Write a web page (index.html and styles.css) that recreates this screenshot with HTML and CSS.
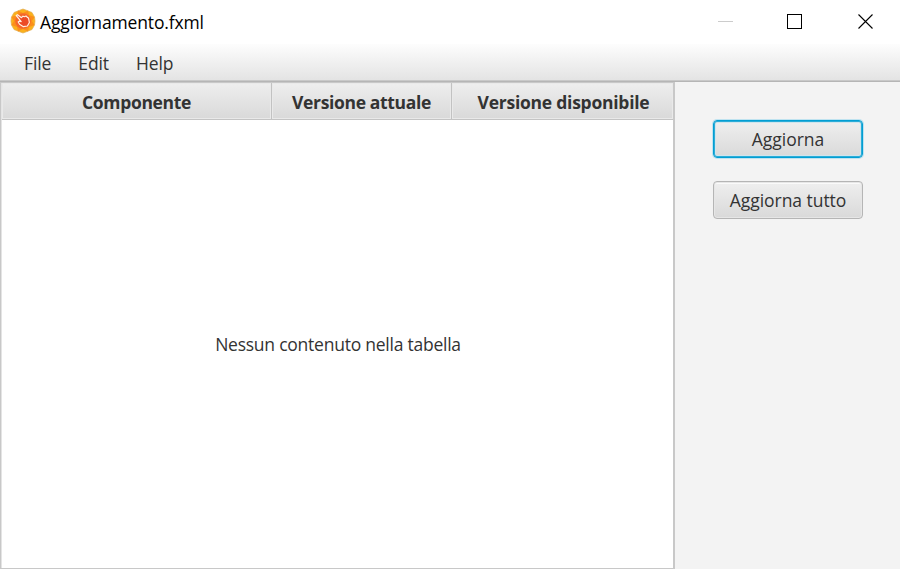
FILE: index.html
```html
<!DOCTYPE html>
<html lang="it">
<head>
<meta charset="utf-8">
<title>Aggiornamento.fxml</title>
<link rel="stylesheet" href="styles.css">
</head>
<body>
<div class="window">
  <header class="titlebar">
    <svg class="logo" width="26" height="26" viewBox="0 0 26 26">
      <path d="M13 1 L17 2.500 L22 4.500 L24.500 9 L25 13 L24.500 17 L22 21.500 L17 23.500 L13 25 L9 23.500 L4 21.500 L1.500 17 L1 13 L1.500 9 L4 4.500 L9 2.500Z" fill="#fbb11c" stroke="#dfae55" stroke-width=".7" stroke-linejoin="round"/>
      <path d="M8 2.500 L13 5 L18 2.500 L19 7 L24.500 9 L22 13 L24.500 17 L19 19 L18 23.500 L13 21 L8 23.500 L7 19 L1.500 17 L4 13 L1.500 9 L7 7Z" fill="#fb8f1c"/>
      <circle cx="13" cy="13" r="7.800" fill="#f5672a"/>
      <path d="M6.200 7.500 L7.500 6.700 L11.500 9.700 L13 8.200 L14.500 8.700 L16 8 L17.400 9.400 L18.500 10 L19.400 14.500 L17.400 18 L13.400 18.700 L9.600 16.300 L8.200 14 L9.200 13.100 L11.200 13.600Z" fill="#ec4a25" stroke="#fff1e2" stroke-width="1.200" stroke-linejoin="round"/>
    </svg>
    <span class="title">Aggiornamento.fxml</span>
    <svg class="controls" width="156" height="16" viewBox="0 0 156 16" shape-rendering="crispEdges">
      <path d="M0 7.500H15" stroke="#ccc"/>
      <path d="M69.500 .5H83.500V14.500H69.500Z" fill="none" stroke="#000"/>
      <path d="M140.500 .5L154.500 14.500M154.500 .5L140.500 14.500" stroke="#000" stroke-width="1.100" shape-rendering="auto"/>
    </svg>
  </header>
  <nav class="menubar">
    <span>File</span><span>Edit</span><span>Help</span>
  </nav>
  <main class="content">
    <section class="table">
      <div class="columns">
        <div class="column"><span>Componente</span></div>
        <div class="column"><span>Versione attuale</span></div>
        <div class="column"><span>Versione disponibile</span></div>
      </div>
      <div class="placeholder"><span>Nessun contenuto nella tabella</span></div>
    </section>
    <aside class="actions">
      <button class="button focused">Aggiorna</button>
      <button class="button">Aggiorna tutto</button>
    </aside>
  </main>
</div>
</body>
</html>
```
FILE: styles.css
```css
* { box-sizing: border-box; }
body {
  margin: 0;
  font: 17.500px/24px "Open Sans", "Noto Sans", sans-serif;
  color: #333;
}
.window { display: flex; flex-direction: column; width: 900px; height: 569px; overflow: hidden; background: #f3f3f3; }
.titlebar { display: flex; align-items: flex-start; height: 44px; padding: 8px 26px 0 10px; background: #fff; color: #000; }
.title { margin: 2px 0 0 4px; letter-spacing: -.14px; }
.controls { margin: 6px 0 0 auto; }
.menubar {
  display: flex;
  gap: 27px;
  height: 38px;
  padding: 7px 0 0 24px;
  background: linear-gradient(#fdfdfd, #e3e3e3);
  border-bottom: 1px solid #b5b5b5;
  box-shadow: inset 0 -1px #c8c8c8;
}
.menubar span { letter-spacing: -.1px; }
.content { display: flex; flex: 1; }
.table { display: flex; flex-direction: column; width: 675px; border: solid #c8c8c8; border-width: 1px 2px 1px 1px; background: #fff; box-shadow: inset 1px 0 #e4e4e4; }
.columns { display: grid; grid-template-columns: 270px 180px 1fr; height: 37px; margin-left: 1px; border-bottom: 1px solid #c4c4c4; font-weight: 700; }
.column { display: flex; justify-content: center; padding-top: 7px; background: linear-gradient(#eee, #d9d9d9); border-right: 1px solid #c2c2c2; box-shadow: inset 0 0 0 1px #e9e9e9, inset 0 1px #fafafa; }
.column:last-child { padding-left: 2px; border-right: 0; }
.column span { letter-spacing: -.34px; white-space: nowrap; }
.column:last-child span { letter-spacing: -.25px; }
.placeholder { display: flex; flex: 1; align-items: center; justify-content: center; padding-left: 2px; }
.placeholder span { letter-spacing: -.24px; }
.actions { display: flex; flex-direction: column; gap: 23px; padding: 38px 0 0 38px; }
.button {
  width: 150px;
  height: 38px;
  padding: 0;
  border: 1px solid #b5b5b5;
  border-radius: 4px;
  background: linear-gradient(#efefef, #d9d9d9);
  box-shadow: inset 0 0 0 1px #e6e6e6, inset 0 2px #fafafa;
  color: #333;
  font: inherit;
  letter-spacing: -.04px;
}
.focused {
  border-color: #039ed3;
  box-shadow: 0 0 0 1px #bfe3f0, inset 0 0 0 1px #2cadd8, inset 0 0 0 2px #d0e5ed;
}
```
